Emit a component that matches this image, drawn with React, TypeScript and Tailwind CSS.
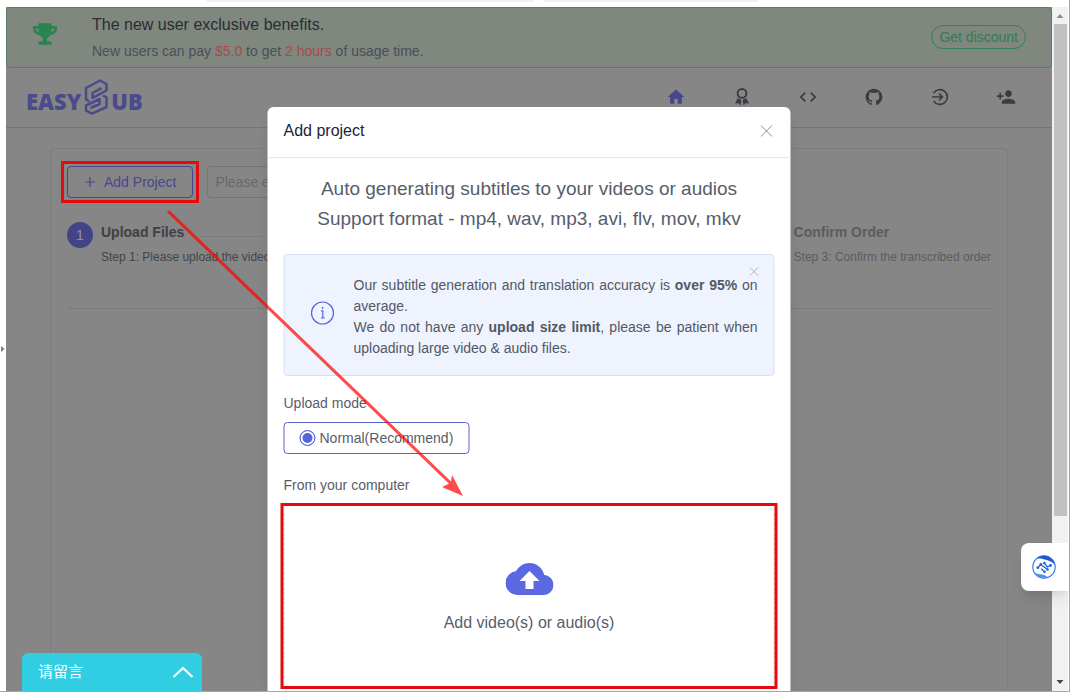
import { useState } from "react";
import { FaTrophy } from "react-icons/fa";
import { MdCloudUpload, MdCode, MdHome, MdPersonAdd } from "react-icons/md";
import { RiGithubFill } from "react-icons/ri";

function MedalIcon() {
  return (
    <svg viewBox="0 0 20 20" className="size-5" fill="none">
      <circle cx="10" cy="6.4" r="4.4" stroke="currentColor" strokeWidth="1.9" />
      <path
        d="M5.6 11.3 8.9 12.6 9.3 14.5 8.4 18.6 6.6 16.2 3 16.6Z"
        fill="currentColor"
      />
      <path
        d="M14.4 11.3 11.1 12.6 10.7 14.5 11.6 18.6 13.4 16.2 17 16.6Z"
        fill="currentColor"
      />
    </svg>
  );
}

function LoginIcon() {
  return (
    <svg
      viewBox="0 0 20 20"
      className="size-5"
      fill="none"
      stroke="currentColor"
      strokeWidth="1.6"
    >
      <path d="M3.6 6.2a7.4 7.4 0 1 1 0 7.6" />
      <path d="M2 10h9.5M9 6.6l3.4 3.4L9 13.4" />
    </svg>
  );
}

function CloseIcon({ className }: { className: string }) {
  return (
    <svg
      viewBox="0 0 12 12"
      className={className}
      stroke="currentColor"
      fill="none"
    >
      <path d="M.5.5l11 11M11.5.5l-11 11" />
    </svg>
  );
}

function Logo() {
  return (
    <a
      href="#"
      aria-label="EasySub"
      className="flex items-center gap-[3px] font-['Noto_Sans',sans-serif] text-[22px] leading-none font-black text-[#4b4b8c]"
    >
      <span className="mt-2">EASY</span>
      <svg
        viewBox="0 0 24 36"
        className="h-9 w-6"
        fill="none"
        stroke="currentColor"
        strokeWidth="2.5"
        strokeLinejoin="round"
      >
        <path d="M22.500 12V5L16 1.500 2 9V20.500L5.500 22.500" />
        <path d="M22.500 11.500 8.500 18.800V14L17.500 9.200" />
        <path d="M19 16.500 22.500 18.500V28L8 34.600 2 31.500V26.500L15.500 20V25L6.500 29" />
      </svg>
      <span className="mt-2">UB</span>
    </a>
  );
}

function Banner() {
  return (
    <div className="flex items-center rounded border border-[#557d65] bg-[#7f877f] pt-[3px] pr-[25px] pb-[2px] pl-[26px]">
      <FaTrophy className="-mt-2 size-6 text-[#2a8450]" />
      <div className="ml-[35px] flex-1">
        <p className="text-base leading-[27px] text-[#2a2d35]">
          The new user exclusive benefits.
        </p>
        <p className="text-sm leading-[27px] text-[#4b4f57]">
          New users can pay <span className="text-[#a84a4a]">$5.0</span> to get{" "}
          <span className="text-[#a84a4a]">2 hours</span> of usage time.
        </p>
      </div>
      <button className="-mt-[2px] h-6 rounded-full border border-[#33805a] px-[7px] text-sm leading-5 text-[#2f7d52]">
        Get discount
      </button>
    </div>
  );
}

function Nav() {
  const links = [
    { label: "Home", icon: <MdHome className="size-5 text-[#46468c]" /> },
    { label: "Pricing", icon: <MedalIcon /> },
    { label: "API", icon: <MdCode className="size-5" /> },
    { label: "GitHub", icon: <RiGithubFill className="size-5" /> },
    { label: "Login", icon: <LoginIcon /> },
    { label: "Register", icon: <MdPersonAdd className="size-5" /> },
  ];

  return (
    <header className="flex h-15 items-center justify-between border-b border-[#747676] pr-[13px] pb-px pl-5">
      <Logo />
      <nav className="flex text-[#3a3c43]">
        {links.map((link) => (
          <a
            key={link.label}
            href="#"
            aria-label={link.label}
            className="flex w-[66px] justify-center"
          >
            {link.icon}
          </a>
        ))}
      </nav>
    </header>
  );
}

function Step({
  index,
  title,
  text,
  active,
  last,
}: {
  index: number;
  title: string;
  text: string;
  active?: boolean;
  last?: boolean;
}) {
  return (
    <li className={last ? "flex gap-2" : "flex min-w-0 flex-1 gap-2"}>
      <span
        className={
          active
            ? "flex size-[26px] shrink-0 items-center justify-center rounded-full bg-[#434488] text-sm text-[#8e8e9c]"
            : "flex size-[26px] shrink-0 items-center justify-center rounded-full border border-[#6a6a6a] text-sm text-[#5a5a5a]"
        }
      >
        {index}
      </span>
      <div className="min-w-0 flex-1">
        <div className="flex items-center gap-4">
          <h3
            className={
              active
                ? "text-sm leading-5 font-bold whitespace-nowrap text-[#3f4044]"
                : "text-sm leading-5 font-bold whitespace-nowrap text-[#5c5c5e]"
            }
          >
            {title}
          </h3>
          {!last && <span className="mt-2 h-px flex-1 bg-[#7d7d7d]" />}
        </div>
        <p
          className={
            active
              ? "pt-1 text-xs leading-[22px] whitespace-nowrap text-[#434448]"
              : "pt-1 text-xs leading-[22px] whitespace-nowrap text-[#5c5c5e]"
          }
        >
          {text}
        </p>
      </div>
    </li>
  );
}

function Workspace() {
  return (
    <main className="mx-11 mt-5 flex-1 rounded-t border border-b-0 border-[#7c7d7f] px-4 pt-[17px]">
      <div className="flex gap-[14px]">
        <div className="relative">
          <button className="flex h-8 items-center gap-2 rounded border border-[#46478c] px-4 text-sm text-[#46478c]">
            <svg
              viewBox="0 0 12 12"
              className="size-3"
              stroke="currentColor"
              strokeWidth="1.2"
            >
              <path d="M6 1v10M1 6h10" />
            </svg>
            Add Project
          </button>
          <span className="pointer-events-none absolute -inset-x-[6px] -inset-y-[5px] border-3 border-[#e30b0b]" />
        </div>
        <input
          type="text"
          aria-label="Project name"
          placeholder="Please enter"
          className="h-8 w-60 rounded border border-[#757577] px-[7px] text-sm placeholder:text-[#68696b]"
        />
      </div>

      <ol className="mt-6 flex gap-4 border-b border-[#7a7a7b] pb-10">
        <Step
          index={1}
          title="Upload Files"
          text="Step 1: Please upload the video"
          active
        />
        <Step index={2} title="Set Up" text="Step 2: Set up the project" />
        <Step
          index={3}
          title="Confirm Order"
          text="Step 3: Confirm the transcribed order"
          last
        />
      </ol>
    </main>
  );
}

function Notice({ onClose }: { onClose: () => void }) {
  return (
    <div className="relative flex items-center rounded border border-[#d5defa] bg-[#eff3fe] pt-5 pr-4 pb-4 pl-[26px]">
      <svg
        viewBox="0 0 24 24"
        className="-mt-2 size-6 shrink-0 text-[#5a63cf]"
        fill="none"
        stroke="currentColor"
      >
        <circle cx="12" cy="12" r="11" strokeWidth="1.2" />
        <path d="M10.500 9.800H12.300V17M10.400 17h3.800" strokeWidth="1.2" />
        <circle cx="12" cy="6.900" r=".6" fill="currentColor" />
      </svg>
      <p className="ml-[19px] text-justify text-sm leading-[21px] text-[#525866]">
        Our subtitle generation and translation accuracy is{" "}
        <strong>over 95%</strong> on average.
        <br />
        We do not have any <strong>upload size limit</strong>, please be patient
        when uploading large video &amp; audio files.
      </p>
      <button
        aria-label="Close notice"
        onClick={onClose}
        className="absolute top-3 right-[15px] text-[#9ca0ab]"
      >
        <CloseIcon className="size-[9px]" />
      </button>
    </div>
  );
}

function AddProjectDialog() {
  const [showNotice, setShowNotice] = useState(true);

  return (
    <div
      role="dialog"
      aria-labelledby="dialog-title"
      className="absolute top-[100px] bottom-0 left-1/2 w-1/2 -translate-x-1/2 rounded-t-md bg-white shadow-lg"
    >
      <div className="flex h-[51px] items-center justify-between border-b border-[#e6e6e8] pr-[18px] pb-[2px] pl-4">
        <h2 id="dialog-title" className="text-base text-[#20243a]">
          Add project
        </h2>
        <button aria-label="Close" className="text-[#8a8a8c]">
          <CloseIcon className="size-3" />
        </button>
      </div>

      <div className="px-4 pt-4 text-sm text-[#575d6b]">
        <p className="mb-5 text-center text-[19px] leading-[30px]">
          Auto generating subtitles to your videos or audios
          <br />
          Support format - mp4, wav, mp3, avi, flv, mov, mkv
        </p>

        {showNotice && <Notice onClose={() => setShowNotice(false)} />}

        <p className="mt-[15px] leading-6">Upload mode</p>
        <label className="mt-[7px] inline-flex h-8 items-center gap-1 rounded border border-[#5a63c8] px-[15px] align-top">
          <input
            type="radio"
            name="mode"
            defaultChecked
            className="size-4 appearance-none rounded-full border border-[#5664dc] bg-[#5664dc] ring-2 ring-white ring-inset"
          />
          Normal(Recommend)
        </label>

        <p className="mt-[19px] leading-6">From your computer</p>
        <div className="relative mt-[6px]">
          <button className="flex h-[186px] w-full flex-col items-center justify-center border border-dashed border-[#d9d9d9] pb-[2px] text-base">
            <MdCloudUpload className="size-12 text-[#5a69e2]" />
            <span className="pt-2">Add video(s) or audio(s)</span>
          </button>
          <span className="pointer-events-none absolute -inset-x-[3px] inset-y-0 border-3 border-[#e30b0b]" />
        </div>
      </div>
    </div>
  );
}

function Scrollbar() {
  return (
    <div className="flex w-4 flex-col items-center bg-[#f1f1f3]">
      <svg viewBox="0 0 16 17" className="h-[17px] w-4" fill="#8f8f8f">
        <path d="M4.500 11 8 7l3.500 4z" />
      </svg>
      <div className="h-[72%] w-[13px] bg-[#c1c1c1]" />
      <svg viewBox="0 0 16 17" className="mt-auto h-[17px] w-4" fill="#454545">
        <path d="M4.500 6 8 10l3.500-4z" />
      </svg>
    </div>
  );
}

function Assistant() {
  return (
    <button
      aria-label="Assistant"
      className="absolute right-0 bottom-[100px] flex size-12 items-center justify-center rounded-l-lg bg-white shadow-lg"
    >
      <svg viewBox="0 0 24 24" className="-ml-[2px] size-6" fill="none">
        <circle cx="12" cy="12" r="11.2" stroke="#2a72e8" strokeWidth="1.1" />
        <path
          d="M4.500 3.700C9-.5 16-.5 20.500 5c1.600 2 2.200 3.400 2.500 5C20.500 7 18 6.200 14.500 5 11 3.800 8 3 4.500 3.700Z"
          fill="#1f57c8"
        />
        <path
          d="M1.500 16.500c2 2 4.500 2.200 7.500 2.800 3.500.7 5 1.500 7 2.800C11 24.700 4.500 22.500 1.500 16.500Z"
          fill="#4f94f2"
        />
        <path
          d="M5.800 12.700 8.800 9.500 15.500 14.500M9.500 14l3 2.700M12.300 8l3 4 3.200-1.500"
          stroke="#2463d8"
          strokeWidth="1.3"
          strokeLinecap="round"
        />
        <g fill="#2463d8">
          <circle cx="5.800" cy="12.700" r="1.400" />
          <circle cx="8.800" cy="9.500" r="1.400" />
          <circle cx="12.300" cy="8" r="1.300" />
          <circle cx="18.500" cy="10.500" r="1.400" />
          <circle cx="12.500" cy="16.700" r="1.300" />
          <circle cx="15.500" cy="14.500" r="1.300" />
        </g>
      </svg>
    </button>
  );
}

export default function App() {
  return (
    <div className="relative flex min-h-screen flex-col overflow-hidden border-r border-b border-[#a3a7ad] bg-white font-['Liberation_Sans',Arial,sans-serif]">
      <div className="flex h-[7px] items-start gap-[10px] pl-[206px]">
        <span className="h-[2px] w-[328px] rounded-b bg-[#f1f1f1]" />
        <span className="h-[2px] w-[215px] rounded-b bg-[#f1f1f1]" />
      </div>

      <div className="flex flex-1">
        <div className="flex w-[6px] items-center">
          <svg viewBox="0 0 6 8" className="h-2 w-[6px]" fill="#7a7a7a">
            <path d="M1 1 4.500 4 1 7z" />
          </svg>
        </div>
        <div className="relative flex flex-1 flex-col overflow-hidden bg-[#868686]">
          <Banner />
          <Nav />
          <Workspace />
          <AddProjectDialog />
          <button className="absolute bottom-0 left-4 flex h-[38px] w-[180px] items-center justify-between rounded-t-md bg-[#30cde3] pr-2 pl-4 font-['Liberation_Sans','Noto_Sans_CJK_SC',sans-serif] text-[15px] text-white">
            请留言
            <svg
              viewBox="0 0 22 12"
              className="h-3 w-[22px]"
              fill="none"
              stroke="currentColor"
              strokeWidth="2"
            >
              <path d="M1.500 11 11 2l9.500 9" />
            </svg>
          </button>
        </div>
        <div className="mr-px flex">
          <Scrollbar />
        </div>
      </div>

      <Assistant />

      {/* Arrow from the Add Project button to the upload area */}
      <svg
        viewBox="0 0 300 290"
        className="pointer-events-none absolute top-[209px] left-[166px] h-[290px] w-[300px]"
        fill="red"
        opacity="0.7"
      >
        <path d="M1 3.200 3.200 1 285 272.500 286 266 297 287 276 278 283 274.800Z" />
      </svg>
    </div>
  );
}
